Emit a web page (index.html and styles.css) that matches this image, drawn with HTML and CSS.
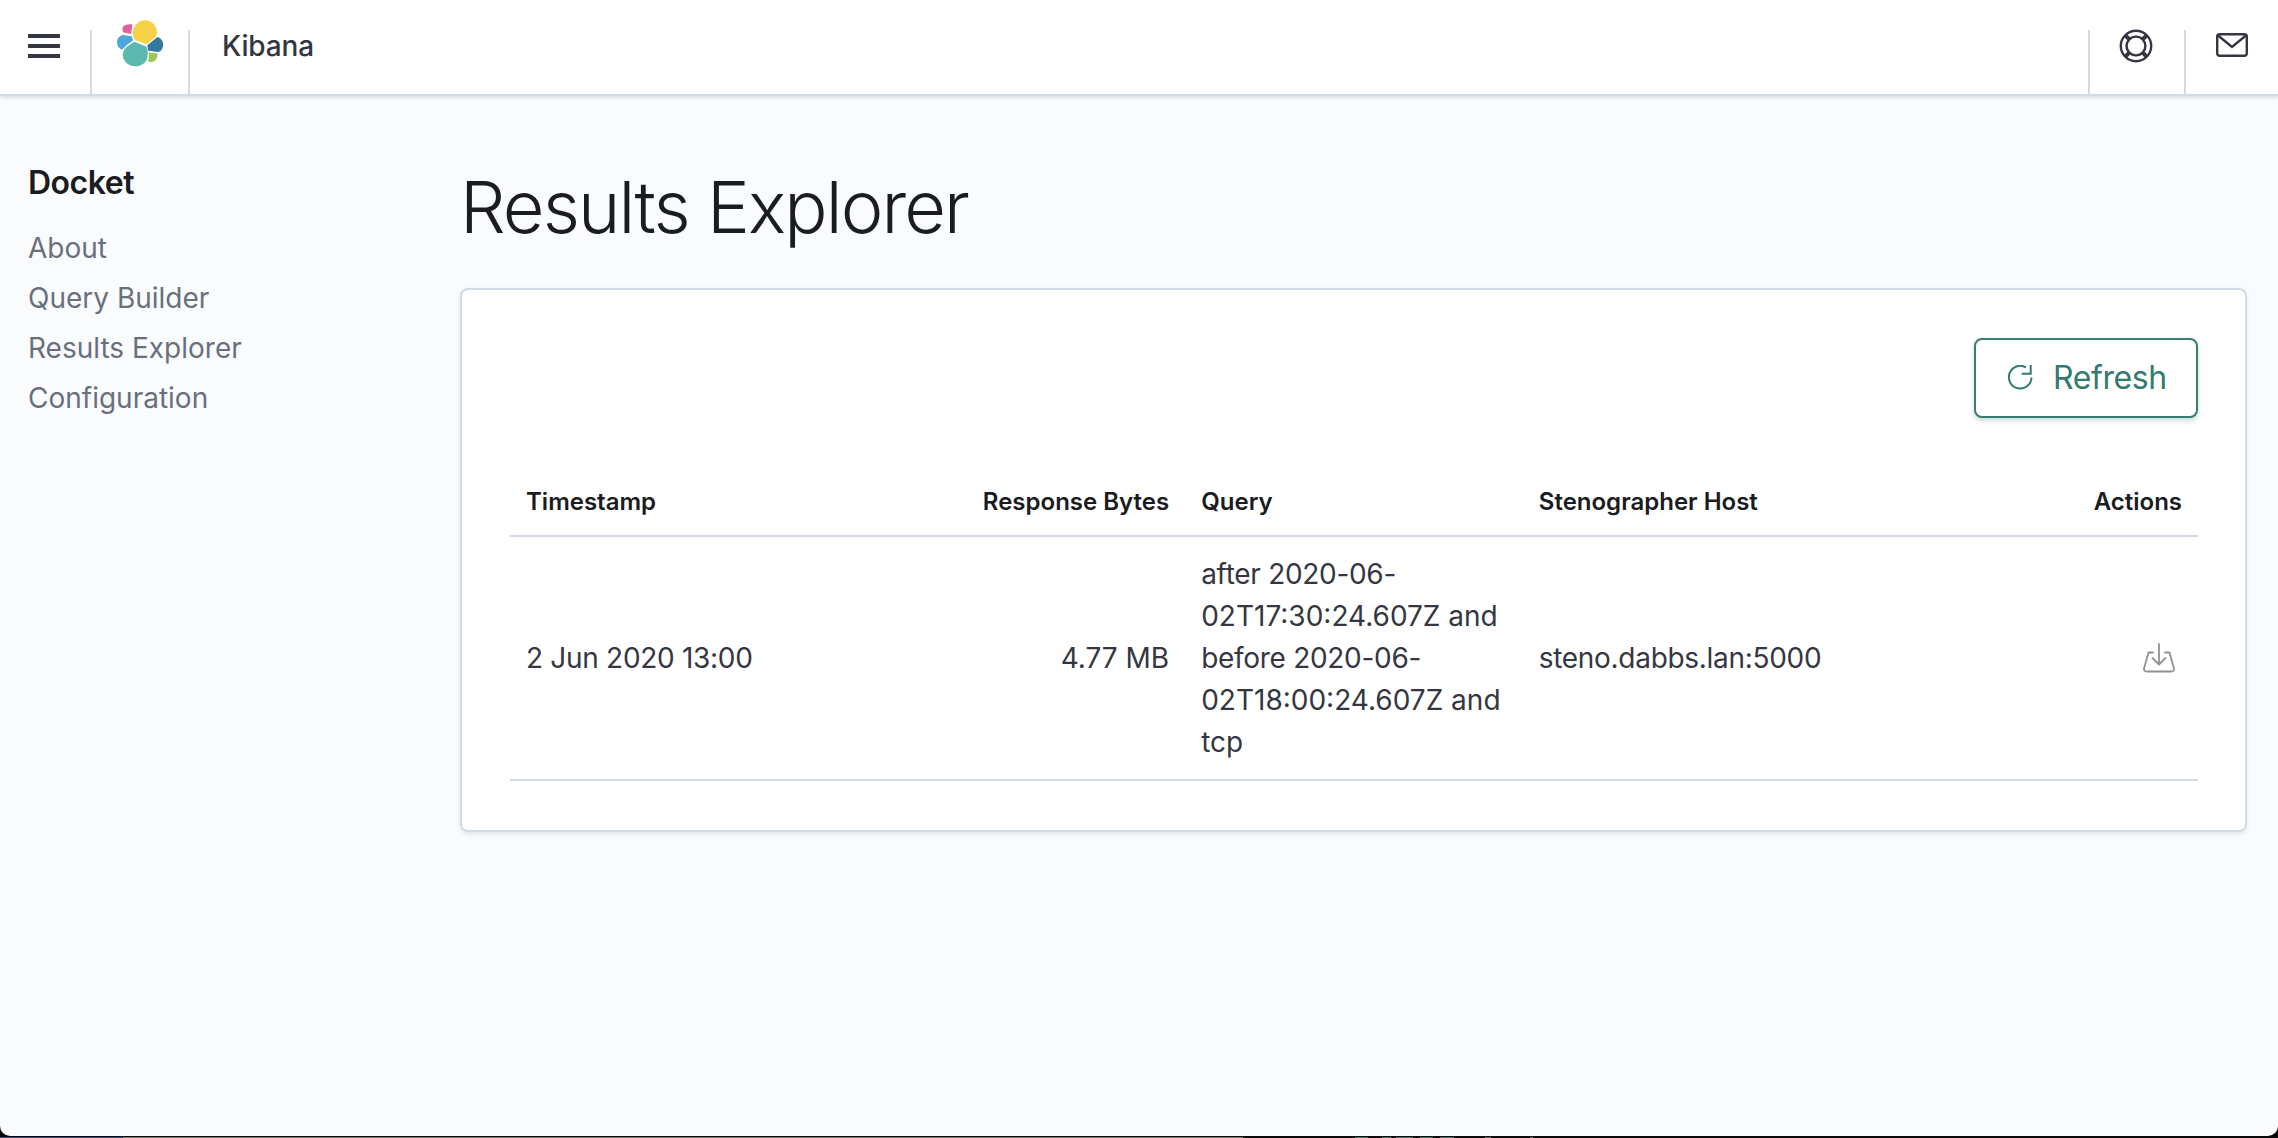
FILE: index.html
```html
<!DOCTYPE html>
<html lang="en">
<head>
<meta charset="utf-8">
<title>Results Explorer - Kibana</title>
<link rel="stylesheet" href="styles.css">
</head>
<body>
<div class="window">
  <header class="topbar">
    <div class="cell cell-menu">
      <svg class="icon-menu" width="32" height="24" viewBox="0 0 32 24"><path d="M0 0h32v4H0zM0 10h32v4H0zM0 20h32v4H0z" fill="#343741"/></svg>
    </div>
    <span class="divider"></span>
    <div class="cell cell-logo">
      <svg width="48" height="47" viewBox="346 59 144 142">
        <path fill="#f6d248" d="M396 100C396 78 412 60 433 60C453 60 469 76 469 96C469 103 467 109 463 113L438 132L404 120C398 114 396 107 396 100Z"/>
        <path fill="#e0609e" d="M366 80C372 73 385 70 395 73L391 101L367 96C365 91 365 85 366 80Z"/>
        <path fill="#4ea6dc" d="M366 104L393 108L397 121L379 134L364 149C356 146 350 138 349 129C347 117 354 107 366 104Z"/>
        <path fill="#33789f" d="M471 110C482 113 489 125 488 136C487 146 481 153 474 156L443 152L440 135Z"/>
        <path fill="#5cb9af" d="M401 125L437 139L441 150C441 155 442 160 441 166C441 185 425 199 404 199C383 199 366 183 366 164C366 155 370 147 378 140Z"/>
        <path fill="#9cc755" d="M444 157L471 160C472 171 466 183 455 186C450 187 446 186 442 184C445 176 445 166 444 157Z"/>
      </svg>
    </div>
    <span class="divider"></span>
    <div class="brand">Kibana</div>
    <span class="divider"></span>
    <div class="cell cell-help">
      <svg width="34" height="34" viewBox="0 0 34 34" fill="none" stroke="#343741" stroke-width="2.4">
        <circle cx="17" cy="17" r="15.2"/>
        <circle cx="17" cy="17" r="9.4"/>
        <path stroke-width="4" d="M6.5 6.500L10.300 10.300M27.500 6.500L23.700 10.300M6.500 27.500L10.300 23.700M27.500 27.500L23.700 23.700"/>
      </svg>
    </div>
    <span class="divider"></span>
    <div class="cell cell-mail">
      <svg width="32" height="24" viewBox="0 0 32 24" fill="none" stroke="#343741" stroke-width="2.400">
        <rect x="1.200" y="1.200" width="29.600" height="21.600" rx="2.500"/>
        <path d="M1.500 2L16 14L30.500 2"/>
      </svg>
    </div>
  </header>

  <div class="page">
    <nav class="sidenav">
      <h2 class="nav-title">Docket</h2>
      <a class="nav-link">About</a>
      <a class="nav-link">Query Builder</a>
      <a class="nav-link">Results Explorer</a>
      <a class="nav-link">Configuration</a>
    </nav>
    <main class="content">
      <h1 class="page-title">Results Explorer</h1>
      <section class="panel">
        <div class="toolbar">
          <button class="refresh">
            <svg width="26" height="26" viewBox="0 0 26 26" fill="none" stroke="#2f7b70" stroke-width="2">
              <path d="M18 2.500A11.300 11.300 0 1 0 23.500 12.500"/>
              <path d="M22.700 0V8.700H13.700"/>
            </svg>
            <span class="refresh-label">Refresh</span>
          </button>
        </div>
        <table class="results">
          <thead>
            <tr>
              <th>Timestamp</th>
              <th class="num">Response Bytes</th>
              <th>Query</th>
              <th>Stenographer Host</th>
              <th class="num">Actions</th>
            </tr>
          </thead>
          <tbody>
            <tr>
              <td class="tight">2 Jun 2020 13:00</td>
              <td class="num">4.77 MB</td>
              <td><span class="tight">after 2020-06-</span>02T17:30:24.607Z and <span class="tight">before 2020-06-</span>02T18:00:24.607Z and tcp</td>
              <td class="tight">steno.dabbs.lan:5000</td>
              <td class="num">
                <svg class="download" width="32" height="30" viewBox="0 0 32 30" fill="none" stroke="#8f9296" stroke-width="1.800" stroke-linecap="round" stroke-linejoin="round">
                  <path d="M16 1V21M9.500 15L16 21.500L22.500 15"/>
                  <path d="M10 9.500H5.500L1 25.500Q.8 28.500 3.500 28.500H28.500Q31.200 28.500 31 25.500L26.500 9.500H22"/>
                </svg>
              </td>
            </tr>
          </tbody>
        </table>
      </section>
    </main>
  </div>
</div>
<div class="taskstrip"></div>
</body>
</html>
```

FILE: styles.css
```css
* { box-sizing: border-box; }
html, body { margin: 0; height: 100%; }
body {
  display: flex;
  flex-direction: column;
  height: 1138px;
  overflow: hidden;
  background: #000;
  font-family: Inter, "Liberation Sans", sans-serif;
  color: #343741;
}
.window {
  flex: 1;
  min-height: 0;
  background: #fafbfd;
  border-radius: 0 0 10px 10px;
  overflow: hidden;
}
.taskstrip {
  height: 2px;
  background-color: #0a0a0a;
  background-image:
    linear-gradient(to bottom, transparent 1px, #0a0a0a 1px),
    linear-gradient(to right,
      #2c4a86 0 123px, #7f7f7c 123px 1243px, #0a0a0a 1243px 1355px,
      #4f6e68 1355px 1368px, #0a0a0a 1368px 1382px,
      #4f6e68 1382px 1391px, #0a0a0a 1391px 1396px,
      #4f6e68 1396px 1413px, #0a0a0a 1413px 1420px,
      #4f6e68 1420px 1433px, #0a0a0a 1433px 1440px,
      #4f6e68 1440px 1454px, #0a0a0a 1454px 1485px,
      #6d6f6f 1485px 1491px, #0a0a0a 1491px 1530px,
      #6d6f6f 1530px 1533px, #0a0a0a 1533px);
  background-size: 100% 2px;
  transform: scaleY(-1);
}

.topbar {
  display: flex;
  align-items: flex-start;
  height: 96px;
  background: #fff;
  border-bottom: 2px solid #d3dae6;
  box-shadow: 0 2px 3px rgba(152, 162, 179, .3);
  position: relative;
}
.divider {
  flex: none;
  width: 2px;
  height: 64px;
  margin-top: 30px;
  background: #d3dae6;
}
.cell { flex: none; display: flex; }
.cell-menu { width: 90px; padding: 34px 0 0 28px; }
.cell-logo { width: 96px; padding-top: 20px; justify-content: center; }
.brand {
  flex: 1;
  padding: 27px 0 0 32px;
  font-size: 28px;
  line-height: 38px;
  font-weight: 500;
  letter-spacing: -.15px;
  color: #343741;
}
.cell-help { width: 94px; padding: 29px 0 0 29px; }
.cell-mail { width: 92px; padding: 33px 0 0 30px; }

.page { display: flex; }
.sidenav {
  flex: none;
  width: 460px;
  padding: 63px 0 0 28px;
  display: flex;
  flex-direction: column;
}
.nav-title {
  margin: 0 0 16px;
  font-size: 32px;
  line-height: 48px;
  font-weight: 600;
  letter-spacing: -.5px;
  color: #1a1c21;
}
.nav-link {
  font-size: 28px;
  line-height: 50px;
  color: #69707d;
}
.content { flex: none; width: 1787px; }
.page-title {
  margin: 0;
  padding-top: 69px;
  height: 192px;
  font-size: 72px;
  line-height: 84px;
  font-weight: 300;
  letter-spacing: -1.9px;
  color: #1a1c21;
}
.panel {
  background: #fff;
  border: 2px solid #d3dae6;
  border-radius: 8px;
  box-shadow: 0 2px 4px rgba(152, 162, 179, .25);
  padding: 48px 47px 49px 48px;
}
.toolbar { display: flex; justify-content: flex-end; margin-bottom: 48px; }
.refresh {
  display: flex;
  align-items: center;
  gap: 19px;
  width: 224px;
  height: 80px;
  padding: 0 0 0 32px;
  background: #fff;
  border: 2px solid #387c72;
  border-radius: 8px;
  box-shadow: 0 3px 5px rgba(47, 123, 112, .25);
  font: 400 32px Inter, "Liberation Sans", sans-serif;
  letter-spacing: -.4px;
  color: #337a6f;
}
.refresh-label { padding-bottom: 2px; }
.results {
  width: 100%;
  table-layout: fixed;
  border-collapse: collapse;
  border-bottom: 2px solid #d3dae6;
}
.results th {
  height: 70px;
  padding: 2px 16px 0;
  text-align: left;
  font-size: 24px;
  font-weight: 600;
  color: #1a1c21;
  border-bottom: 2px solid #d3dae6;
}
.results td {
  padding: 16px;
  font-size: 28px;
  line-height: 42px;
  color: #343741;
}
.results .tight { letter-spacing: -.3px; }
.results .num { text-align: right; }
.download { display: block; margin: 0 7px 0 auto; }
```
